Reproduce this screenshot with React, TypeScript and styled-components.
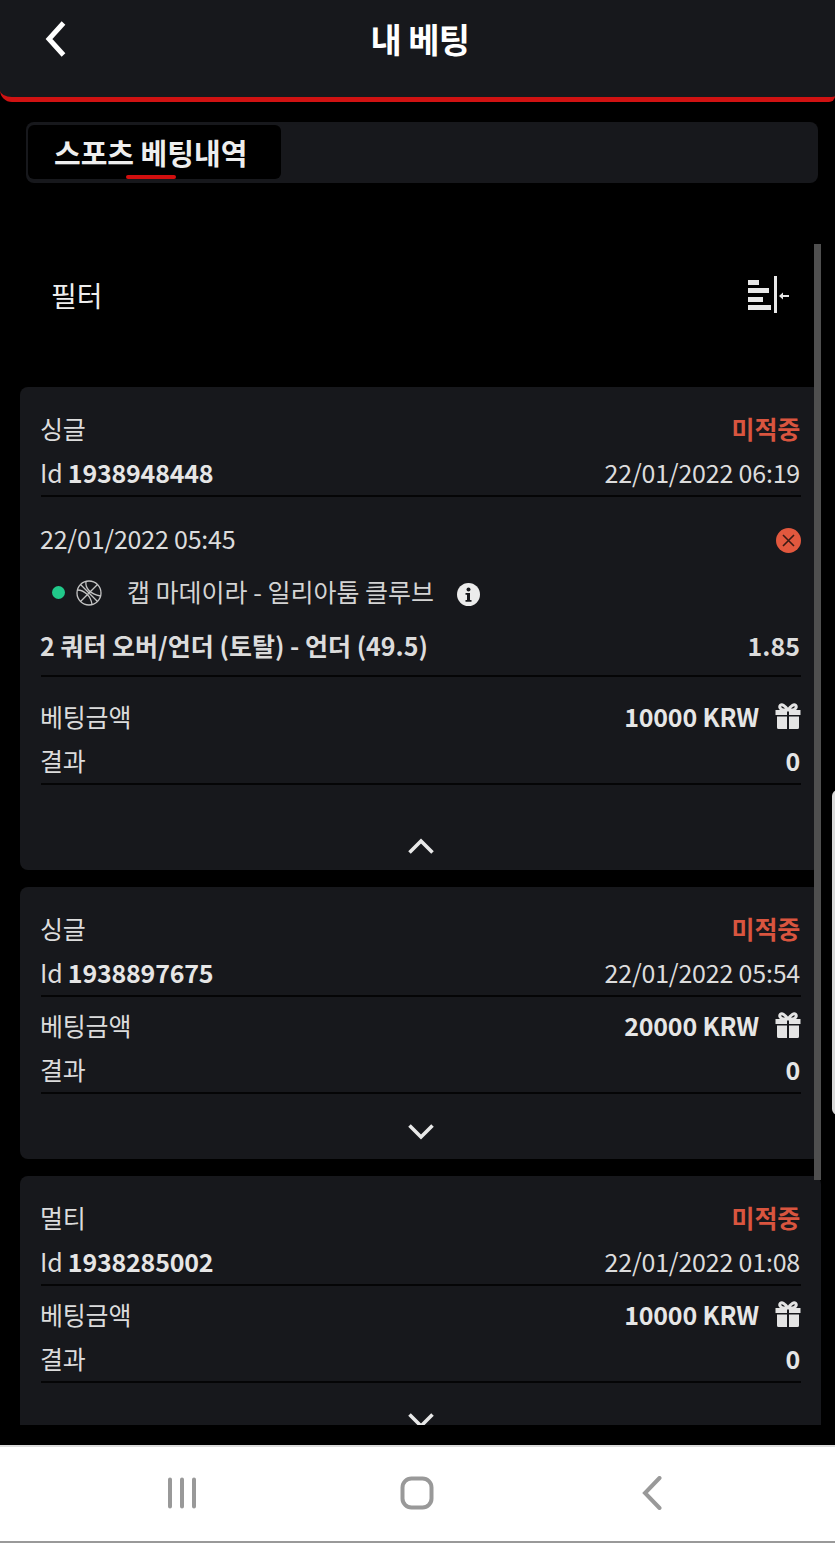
import React from 'react';
import styled, { createGlobalStyle } from 'styled-components';

const Global = createGlobalStyle`
  html, body { margin: 0; padding: 0; background: #000; }
  body { font-family: "Noto Sans CJK KR", "Noto Sans", sans-serif; }
  * { box-sizing: border-box; }
`;

const Page = styled.div`
  position: relative;
  width: 835px;
  height: 1543px;
  background: #000;
  overflow: hidden;
  display: flex;
  flex-direction: column;
`;

const Header = styled.header`
  height: 102px;
  flex: none;
  background: #17181c;
  border-bottom: 5px solid #d01212;
  border-bottom-left-radius: 12px;
  border-bottom-right-radius: 6px;
  display: grid;
  grid-template-columns: 1fr auto 1fr;
  padding: 0 0 19px 5px;
  align-items: center;
`;

const BackButton = styled.div`
  display: flex;
  align-items: center;
  height: 40px;
  padding-left: 39px;
`;

const Title = styled.h1`
  margin: 0;
  color: #fff;
  font-size: 34px;
  font-weight: 700;
  letter-spacing: -0.7px;
  line-height: 44px;
`;

const TabBar = styled.nav`
  margin: 20px 17px 0 26px;
  height: 61px;
  flex: none;
  background: #17181c;
  border-radius: 8px;
  padding: 3px 2px 4px;
  display: flex;
`;

const ActiveTab = styled.div`
  position: relative;
  width: 253px;
  background: #000;
  border-radius: 6px;
  color: #eee;
  font-size: 29px;
  font-weight: 700;
  line-height: 55px;
  padding-left: 26px;
  &::after {
    content: '';
    position: absolute;
    left: 98px;
    bottom: 0;
    width: 50px;
    height: 4px;
    border-radius: 2px;
    background: #d20f0f;
  }
`;

const FilterRow = styled.div`
  height: 204px;
  flex: none;
  display: flex;
  align-items: center;
  justify-content: space-between;
  padding: 44px 45px 24px 51px;
  color: #eee;
  font-size: 28px;
`;

const ListViewport = styled.div`
  height: 1038px;
  flex: none;
  margin: 0 14px 0 20px;
  overflow: hidden;
  display: flex;
  flex-direction: column;
  gap: 17px;
`;

const Card = styled.article<{ $height: number }>`
  flex: none;
  height: ${p => p.$height}px;
  background: #17181c;
  border-radius: 8px;
  padding: 21px 20px 0 21px;
  display: flex;
  flex-direction: column;
`;

const Row = styled.div`
  display: flex;
  justify-content: space-between;
  align-items: center;
  height: 44px;
  flex: none;
  padding-right: 1px;
  color: #dcdcdc;
  font-size: 25px;
  letter-spacing: -0.2px;
  & > span { padding-bottom: 4px; }
  & > span:first-child { margin-left: -1px; }
  & > svg { margin-right: -1px; }
`;

const RuledRow = styled(Row)`
  border-bottom: 2px solid #050506;
  height: 45px;
`;

const Loss = styled.span`
  color: #d9553f;
  font-weight: 700;
`;

const Strong = styled.b`
  font-weight: 700;
  color: #e6e6e6;
`;

const Value = styled.span`
  display: flex;
  align-items: center;
  gap: 16px;
  margin-right: -1px;
  font-weight: 700;
  color: #e6e6e6;
`;

const ZeroValue = styled(Value)`
  margin-right: 0;
`;

const Details = styled.div<{ $top: number }>`
  margin-top: ${p => p.$top}px;
  flex: none;
`;

const Match = styled.div`
  display: flex;
  align-items: center;
  height: 53px;
  margin-top: 4px;
  color: #d4d4d4;
  font-size: 25px;
  padding-left: 11px;
`;

const Dot = styled.span`
  width: 13px;
  height: 13px;
  border-radius: 50%;
  background: #21c98a;
  margin-right: 11px;
`;

const MatchName = styled.span`
  margin: 0 23px 4px 25px;
`;

const Bet = styled(RuledRow)`
  height: 58px;
  padding-bottom: 1px;
  font-weight: 700;
  letter-spacing: 0;
`;

const Footer = styled.div`
  flex: 1;
  display: flex;
  justify-content: center;
  align-items: flex-end;
`;

const ChevronBox = styled.span<{ $h: number }>`
  height: ${p => p.$h}px;
`;

const Scrollbar = styled.div`
  position: absolute;
  left: 814px;
  top: 244px;
  width: 7px;
  height: 936px;
  background: #4f4f4f;
`;

const EdgeHandle = styled.div`
  position: absolute;
  left: 832px;
  top: 790px;
  width: 8px;
  height: 325px;
  background: #d9d9d9;
  border-radius: 6px 0 0 6px;
`;

const NavBar = styled.footer`
  margin-top: 20px;
  flex: 1;
  background: #fff;
  border-top: 2px solid #dcdcdc;
  border-bottom: 2px solid #999;
  display: grid;
  grid-template-columns: repeat(3, 235px);
  align-items: center;
  padding: 0 0 2px 64px;
`;

const NavSlot = styled.div`
  display: flex;
  justify-content: center;
`;

const Back = () => (
  <svg width="24" height="36" viewBox="0 0 24 36">
    <path d="M19.500 2 L5 18 L19.500 34" fill="none" stroke="#fff" strokeWidth="5" />
  </svg>
);

const FilterIcon = () => (
  <svg width="42" height="38" viewBox="0 0 42 38" fill="#e8e8e8">
    <rect x="0" y="4" width="11" height="5" />
    <rect x="0" y="12" width="21" height="5" />
    <rect x="0" y="21" width="15" height="5" />
    <rect x="0" y="29" width="23" height="5" />
    <rect x="26" y="0" width="3" height="37" />
    <path d="M41 19h-6v-2.500l-4 3.500 4 3.500V21h6z" />
  </svg>
);

const Up = () => (
  <svg width="28" height="18" viewBox="0 0 28 18">
    <path d="M2.500 15.500 L14 4 L25.500 15.500" fill="none" stroke="#e8e8e8" strokeWidth="3.600" />
  </svg>
);

const Down = () => (
  <svg width="28" height="18" viewBox="0 0 28 18">
    <path d="M2.500 2.500 L14 14 L25.500 2.500" fill="none" stroke="#e8e8e8" strokeWidth="3.600" />
  </svg>
);

const Gift = () => (
  <svg width="26" height="26" viewBox="0 0 26 26" fill="#e4e4e4">
    <path d="M0.500 7h11.500v5H0.500zM14 7h11.500v5H14zM2 13.500H12V26H3.500A1.500 1.500 0 0 1 2 24.500zM14 13.500h10V24.500A1.500 1.500 0 0 1 22.500 26H14z" />
    <path d="M13 7C10 2.500 7 1 5.500 2.200 4 3.500 5 6.500 8 7zM13 7c3-4.500 6-6 7.500-4.800C22 3.500 21 6.500 18 7z" fill="none" stroke="#e4e4e4" strokeWidth="3" />
  </svg>
);

const CrossBadge = () => (
  <svg width="25" height="25" viewBox="0 0 25 25">
    <circle cx="12.500" cy="12.500" r="12.500" fill="#e2583e" />
    <path d="M7 7l11 11M18 7L7 18" stroke="#3a1a14" strokeWidth="1.600" />
  </svg>
);

const Ball = () => (
  <svg width="26" height="26" viewBox="0 0 26 26" fill="none" stroke="#c4c4c4" strokeWidth="1.300">
    <circle cx="13" cy="13" r="12" />
    <path d="M4.500 4.500L21.500 21.500M21.500 4.500L4.500 21.500M10 1.500C9 8 14 14 24.500 16M1.500 10C8 10 15 16 16 24.500" />
  </svg>
);

const InfoSvg = styled.svg`
  margin-top: 4px;
`;

const Info = () => (
  <InfoSvg width="23" height="23" viewBox="0 0 23 23">
    <circle cx="11.500" cy="11.500" r="11.500" fill="#ececec" />
    <circle cx="11.500" cy="6.500" r="2" fill="#17181c" />
    <path d="M8.500 10h4.500v7h1.500v1.800h-6V17H10v-5.200H8.500z" fill="#17181c" />
  </InfoSvg>
);

const Bars = () => (
  <svg width="30" height="32" viewBox="0 0 30 32" stroke="#999" strokeWidth="4" strokeLinecap="round">
    <path d="M3 2.500v27M15 2.500v27M27 2.500v27" />
  </svg>
);

const Home = () => (
  <svg width="34" height="34" viewBox="0 0 34 34">
    <rect x="2.500" y="2.500" width="29" height="29" rx="9" fill="none" stroke="#999" strokeWidth="4" />
  </svg>
);

const NavBack = () => (
  <svg width="20" height="34" viewBox="0 0 20 34">
    <path d="M17.500 2 L3 17 L17.500 32" fill="none" stroke="#999" strokeWidth="4" strokeLinecap="round" />
  </svg>
);

type Ticket = {
  kind: string;
  id: string;
  time: string;
  stake: string;
  height: number;
  expanded?: boolean;
};

const tickets: Ticket[] = [
  { kind: '싱글', id: '1938948448', time: '22/01/2022 06:19', stake: '10000 KRW', height: 483, expanded: true },
  { kind: '싱글', id: '1938897675', time: '22/01/2022 05:54', stake: '20000 KRW', height: 272 },
  { kind: '멀티', id: '1938285002', time: '22/01/2022 01:08', stake: '10000 KRW', height: 272 },
];

const TicketCard = ({ t }: { t: Ticket }) => (
  <Card $height={t.height}>
    <Row>
      <span>{t.kind}</span>
      <Loss>미적중</Loss>
    </Row>
    <RuledRow>
      <span>Id <Strong>{t.id}</Strong></span>
      <span>{t.time}</span>
    </RuledRow>
    {t.expanded && (
      <Details $top={21}>
        <Row>
          <span>22/01/2022 05:45</span>
          <CrossBadge />
        </Row>
        <Match>
          <Dot />
          <Ball />
          <MatchName>캡 마데이라 - 일리아툼 클루브</MatchName>
          <Info />
        </Match>
        <Bet>
          <span>2 쿼터 오버/언더 (토탈) - 언더 (49.5)</span>
          <span>1.85</span>
        </Bet>
      </Details>
    )}
    <Details $top={t.expanded ? 19 : 8}>
      <Row>
        <span>베팅금액</span>
        <Value>{t.stake}<Gift /></Value>
      </Row>
      <RuledRow>
        <span>결과</span>
        <ZeroValue>0</ZeroValue>
      </RuledRow>
    </Details>
    <Footer>
      {t.expanded ? (
        <ChevronBox $h={34}><Up /></ChevronBox>
      ) : (
        <ChevronBox $h={37}><Down /></ChevronBox>
      )}
    </Footer>
  </Card>
);

export default function App() {
  return (
    <Page>
      <Global />
      <Header>
        <BackButton><Back /></BackButton>
        <Title>내 베팅</Title>
      </Header>
      <TabBar>
        <ActiveTab>스포츠 베팅내역</ActiveTab>
      </TabBar>
      <FilterRow>
        <span>필터</span>
        <FilterIcon />
      </FilterRow>
      <ListViewport>
        {tickets.map(t => <TicketCard key={t.id} t={t} />)}
      </ListViewport>
      <NavBar>
        <NavSlot><Bars /></NavSlot>
        <NavSlot><Home /></NavSlot>
        <NavSlot><NavBack /></NavSlot>
      </NavBar>
      <Scrollbar />
      <EdgeHandle />
    </Page>
  );
}
